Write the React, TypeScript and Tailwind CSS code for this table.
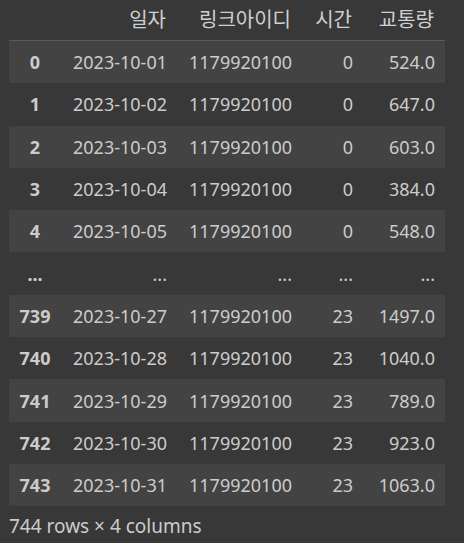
const cols = ["일자", "링크아이디", "시간", "교통량"];

const rows: [string, string, string, string, string][] = [
  ["0", "2023-10-01", "1179920100", "0", "524.0"],
  ["1", "2023-10-02", "1179920100", "0", "647.0"],
  ["2", "2023-10-03", "1179920100", "0", "603.0"],
  ["3", "2023-10-04", "1179920100", "0", "384.0"],
  ["4", "2023-10-05", "1179920100", "0", "548.0"],
  ["...", "...", "...", "...", "..."],
  ["739", "2023-10-27", "1179920100", "23", "1497.0"],
  ["740", "2023-10-28", "1179920100", "23", "1040.0"],
  ["741", "2023-10-29", "1179920100", "23", "789.0"],
  ["742", "2023-10-30", "1179920100", "23", "923.0"],
  ["743", "2023-10-31", "1179920100", "23", "1063.0"],
];

const grid = "grid grid-cols-[52px_116px_125px_61px_82px]";

export default function App() {
  return (
    <div
      className="w-[464px] h-[543px] bg-[#383838] text-[#cccccc] text-[18px] pl-[9px]"
      style={{ fontFamily: "'Noto Sans', 'Noto Sans CJK KR', sans-serif" }}
    >
      {/* header */}
      <div className={`${grid} h-[41px] items-center border-b border-[#5c5c5c] w-[436px] text-[#d0d0d0] text-[20px]`}>
        <div />
        {cols.map((c) => (
          <div key={c} className="text-right pr-[11px] leading-none">
            {c}
          </div>
        ))}
      </div>

      {/* body */}
      {rows.map((r, i) => (
        <div
          key={i}
          className={`${grid} h-[42.3px] items-center w-[436px] ${i % 2 === 0 ? "bg-[#434343]" : ""}`}
        >
          <div className="text-center font-bold leading-none">{r[0]}</div>
          {r.slice(1).map((v, j) => (
            <div key={j} className="text-right pr-[10px] leading-none">
              {v}
            </div>
          ))}
        </div>
      ))}

      <div className="pt-[11px] leading-none text-[19px]">744 rows × 4 columns</div>
    </div>
  );
}
